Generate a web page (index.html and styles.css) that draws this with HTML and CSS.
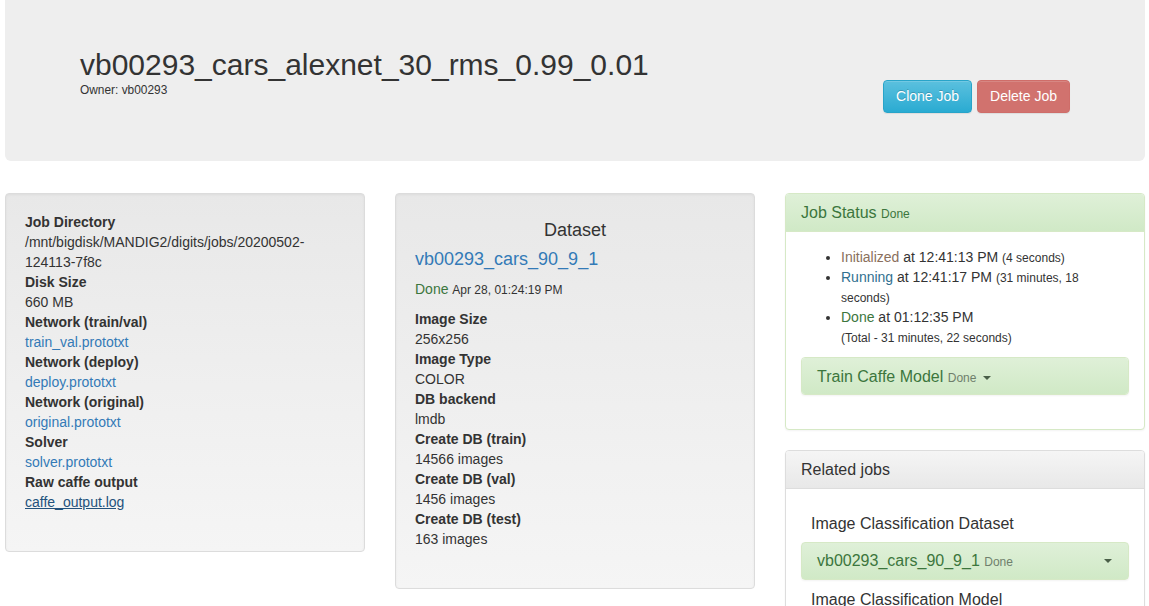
FILE: index.html
```html
<!DOCTYPE html>
<html>
<head>
<meta charset="utf-8">
<title>vb00293_cars_alexnet_30_rms_0.99_0.01</title>
<link rel="stylesheet" href="styles.css">
</head>
<body>
<div class="page">
  <div class="jumbotron">
    <div class="jt-left">
      <h1 class="job-title">vb00293_cars_alexnet_30_rms_0.99_0.01</h1>
      <div class="owner">Owner: vb00293</div>
    </div>
    <div class="jt-right">
      <button class="btn btn-info">Clone Job</button>
      <button class="btn btn-danger">Delete Job</button>
    </div>
  </div>

  <div class="row">
    <div class="col">
      <div class="well">
        <dl class="info">
          <dt>Job Directory</dt>
          <dd>/mnt/bigdisk/MANDIG2/digits/jobs/20200502-124113-7f8c</dd>
          <dt>Disk Size</dt>
          <dd>660 MB</dd>
          <dt>Network (train/val)</dt>
          <dd><a class="link" href="#">train_val.prototxt</a></dd>
          <dt>Network (deploy)</dt>
          <dd><a class="link" href="#">deploy.prototxt</a></dd>
          <dt>Network (original)</dt>
          <dd><a class="link" href="#">original.prototxt</a></dd>
          <dt>Solver</dt>
          <dd><a class="link" href="#">solver.prototxt</a></dd>
          <dt>Raw caffe output</dt>
          <dd><a class="link link-under" href="#">caffe_output.log</a></dd>
        </dl>
      </div>
    </div>

    <div class="col">
      <div class="well">
        <h4 class="ds-title">Dataset</h4>
        <div class="ds-name"><a class="link" href="#">vb00293_cars_90_9_1</a></div>
        <p class="ds-status"><span class="text-success">Done</span> <small class="ds-date">Apr 28, 01:24:19 PM</small></p>
        <dl class="info">
          <dt>Image Size</dt>
          <dd>256x256</dd>
          <dt>Image Type</dt>
          <dd>COLOR</dd>
          <dt>DB backend</dt>
          <dd>lmdb</dd>
          <dt>Create DB (train)</dt>
          <dd>14566 images</dd>
          <dt>Create DB (val)</dt>
          <dd>1456 images</dd>
          <dt>Create DB (test)</dt>
          <dd>163 images</dd>
        </dl>
      </div>
    </div>

    <div class="col">
      <div class="panel panel-success">
        <div class="panel-heading">
          <h3 class="panel-title">Job Status <small class="title-small">Done</small></h3>
        </div>
        <div class="panel-body">
          <ul class="status-list">
            <li><span class="st-init">Initialized</span> at 12:41:13 PM <small>(4 seconds)</small></li>
            <li><span class="st-run">Running</span> at 12:41:17 PM <small>(31 minutes, 18 seconds)</small></li>
            <li><span class="st-done">Done</span> at 01:12:35 PM<br><small>(Total - 31 minutes, 22 seconds)</small></li>
          </ul>
          <div class="panel panel-success panel-inner">
            <div class="panel-heading panel-heading-only">
              <h3 class="panel-title">Train Caffe Model <small class="muted-small">Done</small> <span class="caret"></span></h3>
            </div>
          </div>
        </div>
      </div>

      <div class="panel panel-default">
        <div class="panel-heading">
          <h3 class="panel-title">Related jobs</h3>
        </div>
        <div class="panel-body related-body">
          <div class="rel-label">Image Classification Dataset</div>
          <div class="rel-box">
            <span class="rel-name">vb00293_cars_90_9_1 <small class="muted-small">Done</small></span>
            <span class="caret"></span>
          </div>
          <div class="rel-label rel-label-next">Image Classification Model</div>
        </div>
      </div>
    </div>
  </div>
</div>
</body>
</html>
```

FILE: styles.css
```css
* { box-sizing: border-box; }

html, body {
  margin: 0;
  padding: 0;
  background: #fff;
}

body {
  font-family: "Liberation Sans", Arial, Helvetica, sans-serif;
  font-size: 14px;
  line-height: 20px;
  color: #333;
  overflow: hidden;
}

small {
  line-height: 1;
}

.page {
  width: 1145px;
  padding-left: 5px;
}

/* Jumbotron */
.jumbotron {
  display: flex;
  align-items: flex-start;
  height: 161px;
  padding: 48px 75px 0 75px;
  margin-bottom: 32px;
  background: #eeeeee;
  border-radius: 0 0 6px 6px;
}

.job-title {
  margin: 0 0 1px 0;
  font-size: 30px;
  font-weight: normal;
  line-height: 33px;
  color: #333;
}

.owner {
  font-size: 11.9px;
  line-height: 17px;
  color: #333;
}

.jt-right {
  margin-left: auto;
  padding-top: 32px;
  display: flex;
  gap: 5px;
}

.btn {
  font-family: "Liberation Sans", Arial, Helvetica, sans-serif;
  font-size: 14px;
  line-height: 19px;
  padding: 6px 12px;
  border-radius: 4px;
  border: 1px solid transparent;
  color: #fff;
  cursor: pointer;
  text-shadow: 0 -1px 0 rgba(0, 0, 0, 0.2);
  box-shadow: inset 0 1px 0 rgba(255, 255, 255, 0.15), 0 1px 1px rgba(0, 0, 0, 0.075);
}

.btn-info {
  background: linear-gradient(to bottom, #5bc0de 0, #2aabd2 100%);
  border-color: #28a4c9;
}

.btn-danger {
  background: #d1726e;
  border-color: #cf6d69;
  text-shadow: none;
}

/* Row / columns */
.row {
  display: flex;
  gap: 30px;
  align-items: flex-start;
}

.col {
  width: 360px;
  flex: 0 0 360px;
}

.well {
  padding: 18px 19px 19px 19px;
  border: 1px solid #dcdcdc;
  border-radius: 4px;
  background: linear-gradient(to bottom, #e8e8e8 0, #f5f5f5 100%);
  box-shadow: inset 0 1px 3px rgba(0, 0, 0, 0.05), 0 1px 0 rgba(255, 255, 255, 0.1);
}

.info {
  margin: 0 0 20px 0;
}

.info dt {
  font-weight: bold;
}

.info dd {
  margin: 0;
}

.link {
  color: #337ab7;
  text-decoration: none;
}

.link-under {
  color: #23527c;
  text-decoration: underline;
}

.ds-title {
  margin: 8px 0 9px 0;
  font-size: 18px;
  font-weight: normal;
  line-height: 20px;
  text-align: center;
  color: #333;
}

.ds-name {
  font-size: 18px;
  line-height: 20px;
  margin-bottom: 10px;
}

.ds-status {
  margin: 0 0 10px 0;
}

.text-success {
  color: #3c763d;
}

.ds-date {
  font-size: 12px;
}

/* Panels */
.panel {
  border: 1px solid #ddd;
  border-radius: 4px;
  background: #fff;
  margin-bottom: 20px;
  box-shadow: 0 1px 2px rgba(0, 0, 0, 0.05);
}

.panel-heading {
  padding: 10px 15px;
  border-bottom: 1px solid transparent;
  border-radius: 3px 3px 0 0;
}

.panel-title {
  margin: 0;
  font-size: 16px;
  font-weight: normal;
  line-height: 17px;
  height: 17px;
}

.panel-success {
  border-color: #d6e9c6;
}

.panel-success > .panel-heading {
  color: #3c763d;
  background: linear-gradient(to bottom, #dff0d8 0, #d0e9c6 100%);
  border-color: #d6e9c6;
}

.panel-default > .panel-heading {
  color: #333;
  background: linear-gradient(to bottom, #f5f5f5 0, #e8e8e8 100%);
  border-color: #ddd;
}

.panel-body {
  padding: 15px;
}

.title-small {
  font-size: 12px;
  color: #3c763d;
}

.muted-small {
  font-size: 12px;
  color: #6f7f6c;
}

.status-list {
  margin: 0 0 10px 0;
  padding: 0 6px 0 40px;
}

.status-list li {
  line-height: 20px;
}

.status-list small {
  font-size: 12px;
}

.st-init { color: #8a6f5c; }
.st-run { color: #31708f; }
.st-done { color: #3c763d; }

.panel-inner {
  margin-bottom: 19px;
}

.panel-heading-only {
  padding: 10px 15px 9px 15px;
  border-bottom: 0;
  border-radius: 3px;
}

.caret {
  display: inline-block;
  width: 0;
  height: 0;
  margin-left: 2px;
  vertical-align: middle;
  border-top: 4px solid #4a5f48;
  border-left: 4px solid transparent;
  border-right: 4px solid transparent;
}

.related-body {
  padding-bottom: 15px;
}

.rel-label {
  font-size: 16px;
  line-height: 22px;
  padding-left: 10px;
  margin-top: 9px;
  margin-bottom: 7px;
  color: #333;
}

.rel-label-next {
  margin-top: 9px;
}

.rel-box {
  display: flex;
  align-items: center;
  justify-content: space-between;
  height: 38px;
  padding: 0 16px 0 15px;
  border: 1px solid #d6e9c6;
  border-radius: 4px;
  background: linear-gradient(to bottom, #dff0d8 0, #d0e9c6 100%);
  box-shadow: 0 1px 2px rgba(0, 0, 0, 0.05);
}

.rel-name {
  font-size: 16px;
  color: #3c763d;
}
```
